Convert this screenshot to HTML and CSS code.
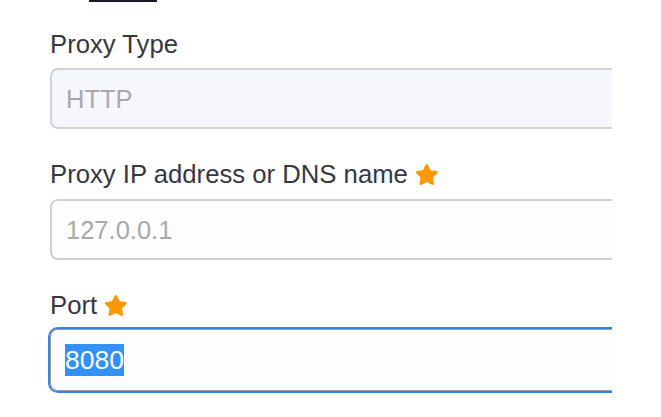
FILE: index.html
```html
<!DOCTYPE html>
<html lang="en">
<head>
<meta charset="utf-8">
<title>Proxy settings</title>
<link rel="stylesheet" href="styles.css">
</head>
<body>
<div class="viewport">
  <div class="tab-indicator"></div>
  <form class="form">
    <div class="field">
      <label class="label">Proxy Type</label>
      <div class="input input-disabled">HTTP</div>
    </div>
    <div class="field field-tall">
      <label class="label">Proxy IP address or DNS name <svg class="star" viewBox="0 0 576 512" aria-hidden="true"><path d="M259.3 17.8L194 150.2 47.9 171.5c-26.2 3.8-36.7 36.1-17.7 54.6l105.7 103-25 145.5c-4.5 26.3 23.2 46 46.4 33.7L288 439.6l130.7 68.7c23.2 12.2 50.9-7.4 46.4-33.7l-25-145.5 105.7-103c19-18.5 8.5-50.8-17.7-54.6L382 150.2 316.7 17.8c-11.7-23.6-45.6-23.9-57.4 0z"/></svg></label>
      <div class="input input-placeholder">127.0.0.1</div>
    </div>
    <div class="field">
      <label class="label">Port <svg class="star" viewBox="0 0 576 512" aria-hidden="true"><path d="M259.3 17.8L194 150.2 47.9 171.5c-26.2 3.8-36.7 36.1-17.7 54.6l105.7 103-25 145.5c-4.5 26.3 23.2 46 46.4 33.7L288 439.6l130.7 68.7c23.2 12.2 50.9-7.4 46.4-33.7l-25-145.5 105.7-103c19-18.5 8.5-50.8-17.7-54.6L382 150.2 316.7 17.8c-11.7-23.6-45.6-23.9-57.4 0z"/></svg></label>
      <div class="input input-focused"><span class="selected">8080</span></div>
    </div>
  </form>
</div>
</body>
</html>
```

FILE: styles.css
```css
html, body {
  margin: 0;
  padding: 0;
  background: #ffffff;
}

.viewport {
  width: 612px;
  height: 417px;
  overflow: hidden;
  font-family: "Liberation Sans", Arial, sans-serif;
}

.tab-indicator {
  width: 68px;
  height: 2px;
  margin-left: 89px;
  background: #16182b;
}

.form {
  display: flex;
  flex-direction: column;
  gap: 30px;
  padding: 27px 0 0 50px;
}

.field {
  display: flex;
  flex-direction: column;
  gap: 9px;
}

.field-tall {
  gap: 10px;
}

.label {
  display: block;
  font-size: 25.7px;
  line-height: 30px;
  height: 30px;
  color: #353843;
  white-space: nowrap;
}

.star {
  width: 23.5px;
  height: 21px;
  fill: #ff9800;
  vertical-align: -2px;
}

.input {
  box-sizing: border-box;
  width: 700px;
  height: 61px;
  border: 2px solid #d3d3d3;
  border-radius: 8px;
  padding: 0 14px;
  display: flex;
  align-items: center;
  font-size: 25.5px;
  line-height: 32px;
}

.input-disabled {
  background: #f6f7fc;
  color: #a9a9ad;
}

.input-placeholder {
  background: #fdfdfd;
  border-color: #d0d0d0;
  color: #a9a9ab;
}

.input-focused {
  height: 62px;
  background: #fdfdfd;
  border: 1px solid #9a9a9a;
  outline: 2px solid #3a84de;
  outline-offset: 0;
  padding-left: 14px;
  font-size: 26.5px;
  color: #222;
}

.selected {
  background: #3390ff;
  color: #ffffff;
}
```
